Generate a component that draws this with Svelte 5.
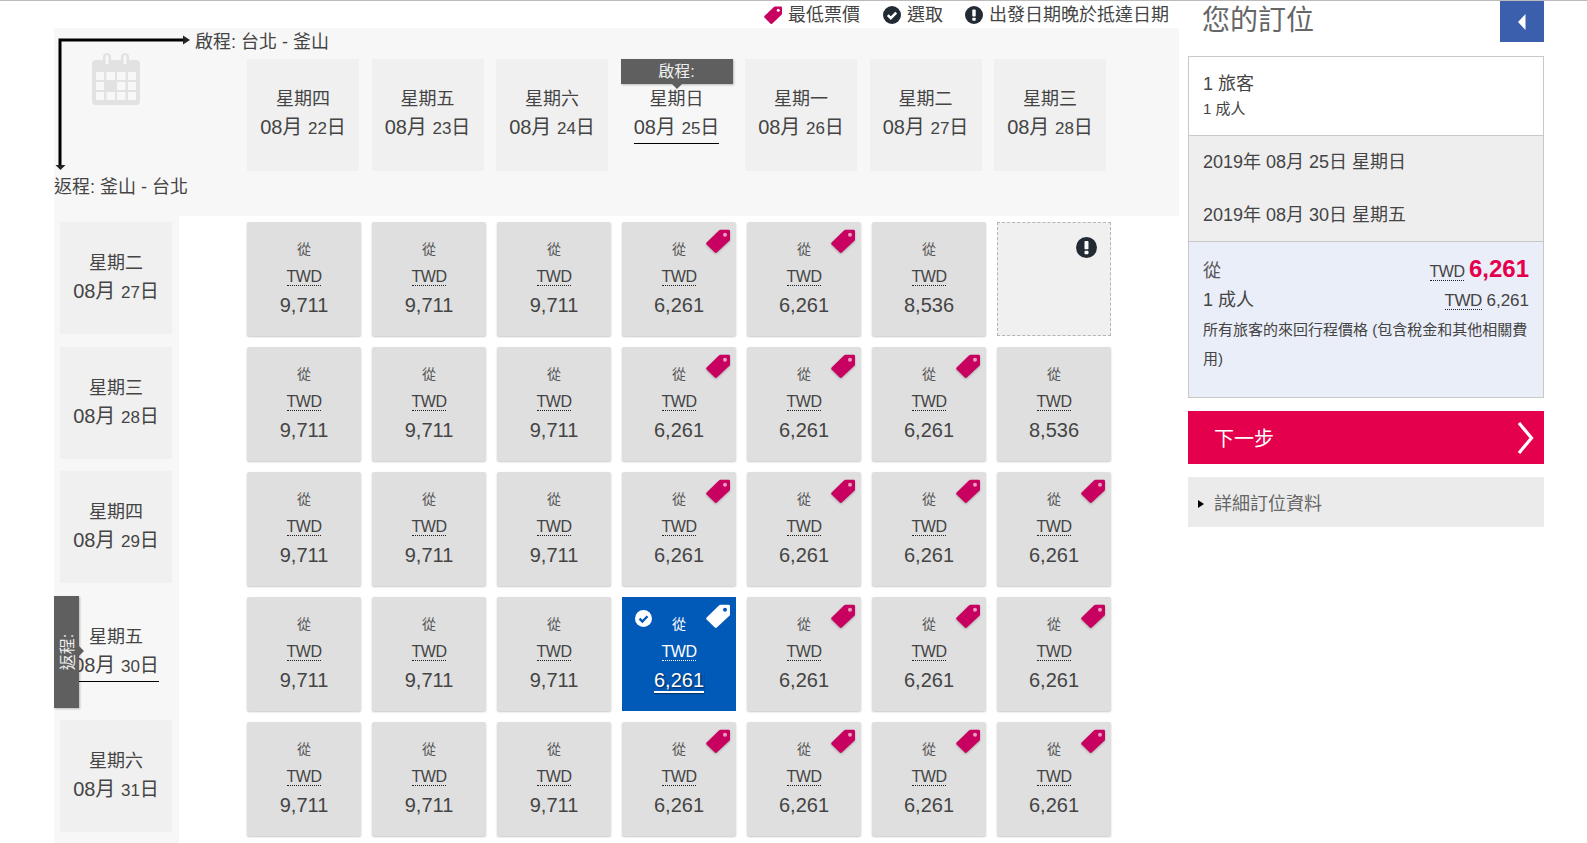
<script>
  const heads = [
    ['星期四', '22'], ['星期五', '23'], ['星期六', '24'], ['星期日', '25', true],
    ['星期一', '26'], ['星期二', '27'], ['星期三', '28']
  ];
  const rows = [
    { day: '星期二', d: '27', cells: [9711, 9711, 9711, 6261, 6261, 8536, null] },
    { day: '星期三', d: '28', cells: [9711, 9711, 9711, 6261, 6261, 6261, 8536] },
    { day: '星期四', d: '29', cells: [9711, 9711, 9711, 6261, 6261, 6261, 6261] },
    { day: '星期五', d: '30', sel: true, cells: [9711, 9711, 9711, 6261, 6261, 6261, 6261] },
    { day: '星期六', d: '31', cells: [9711, 9711, 9711, 6261, 6261, 6261, 6261] }
  ];
  const fmt = (n) => n.toLocaleString('en-US');
</script>

{#snippet tag(size, cls)}
  <svg class="tagicon {cls}" width={size} height={size} viewBox="0 0 24 24">
    <path class="tagbody" d="M0.6 13.4 13.2 1.2Q13.8.8 14.6.8L22.6.8Q24 .8 24 2.2L24 10.4Q24 11.2 23.4 11.8L10.8 23.6Q9.8 24.4 8.8 23.6L.6 15.4Q-.2 14.4.6 13.4Z" />
    <circle class="taghole" cx="19" cy="5.8" r="2" />
  </svg>
{/snippet}

{#snippet check(size)}
  <svg width={size} height={size} viewBox="0 0 18 18">
    <circle cx="9" cy="9" r="9" fill="#222b33" />
    <path d="M4.8 9.2 7.8 12.2 13.2 6.6" fill="none" stroke="#fff" stroke-width="2.6" />
  </svg>
{/snippet}

{#snippet bang(size)}
  <svg width={size} height={size} viewBox="0 0 18 18">
    <circle cx="9" cy="9" r="9" fill="#222b33" />
    <rect x="7.3" y="3.4" width="3.4" height="7.2" rx="0.8" fill="#fff" />
    <rect x="7.3" y="11.8" width="3.4" height="3" rx="0.8" fill="#fff" />
  </svg>
{/snippet}

{#snippet date(d, underline)}
  <div class="dcell-date" class:uline={underline}>08月 <span class="dnum">{d}</span><span class="dri">日</span></div>
{/snippet}

<div class="page">
  <div class="main">
    <div class="legend">
      <span class="lg lg1">{@render tag(18, 'pink')}最低票價</span>
      <span class="lg lg2">{@render check(18)}選取</span>
      <span class="lg lg3">{@render bang(18)}出發日期晚於抵達日期</span>
    </div>

    <div class="head">
      <svg class="arrows" width="140" height="145" viewBox="0 0 140 145">
        <path d="M6 12H130M6 10.5V138" fill="none" stroke="#000" stroke-width="3" />
        <path d="M129 7.500 136 12 129 16.500Z" fill="#222" />
        <path d="M1.500 137H11.500L6.500 142Z" fill="#222" />
      </svg>
      <svg class="cal" width="48" height="52" viewBox="0 0 48 52">
        <path fill="#e2e2e2" d="M4 7H11V4.500Q11 0 15 0Q19 0 19 4.500V7H29V4.500Q29 0 33 0Q37 0 37 4.500V7H44Q48 7 48 11V48Q48 52 44 52H4Q0 52 0 48V11Q0 7 4 7Z" />
        <path fill="#f7f7f7" d="M13.500 3.500Q13.500 2 15 2Q16.500 2 16.500 3.500V11H13.500ZM31.500 3.500Q31.500 2 33 2Q34.500 2 34.500 3.500V11H31.500Z" />
        <g fill="#f7f7f7">
          <rect x="4" y="19" width="8" height="8" /><rect x="14.500" y="19" width="8.500" height="8" /><rect x="25" y="19" width="8.500" height="8" /><rect x="36" y="19" width="8" height="8" />
          <rect x="4" y="29" width="8" height="8" /><rect x="25" y="29" width="8.500" height="8" /><rect x="36" y="29" width="8" height="8" />
          <rect x="4" y="39" width="8" height="8" /><rect x="14.500" y="39" width="8.500" height="8" /><rect x="25" y="39" width="8.500" height="8" /><rect x="36" y="39" width="8" height="8" />
        </g>
      </svg>
      <div class="out-label">啟程: 台北 - 釜山</div>
      <div class="ret-label">返程: 釜山 - 台北</div>
      <div class="head-cells">
        {#each heads as h}
          <div class="hcell" class:active={h[2]}>
            {#if h[2]}<div class="out-tab">啟程:</div>{/if}
            <div class="dcell-day">{h[0]}</div>
            {@render date(h[1], h[2])}
          </div>
        {/each}
      </div>
    </div>

    <div class="body">
      <div class="rowheads">
        {#each rows as r}
          <div class="rcell" class:active={r.sel}>
            {#if r.sel}<div class="ret-tab"><span>返程:</span></div>{/if}
            <div class="dcell-day">{r.day}</div>
            {@render date(r.d, r.sel)}
          </div>
        {/each}
      </div>
      <div class="grid">
        {#each rows as r}
          <div class="grow">
            {#each r.cells as c, i}
              {#if c === null}
                <div class="cell none"><span class="none-ic">{@render bang(21)}</span></div>
              {:else}
                {@const selected = r.sel && i === 3}
                <div class="cell" class:selected>
                  {#if c === 6261}<span class="celltag">{@render tag(24, selected ? 'white' : 'pink')}</span>{/if}
                  {#if selected}
                    <svg class="selcheck" width="17" height="17" viewBox="0 0 18 18">
                      <circle cx="9" cy="9" r="9" fill="#fff" />
                      <path d="M4.800 9.200 7.800 12.200 13.200 6.600" fill="none" stroke="#0159b8" stroke-width="2.600" />
                    </svg>
                  {/if}
                  <div class="from">從</div>
                  <div class="cur"><abbr>TWD</abbr></div>
                  <div class="amt"><span>{fmt(c)}</span></div>
                </div>
              {/if}
            {/each}
          </div>
        {/each}
      </div>
    </div>
  </div>

  <aside class="side">
    <div class="side-top">
      <div class="title">您的訂位</div>
      <div class="collapse"><svg width="8" height="16" viewBox="0 0 8 16"><path d="M7.500 0V16L0 8Z" fill="#fff" /></svg></div>
    </div>
    <div class="box">
      <div class="b1">
        <div class="pax">1 旅客</div>
        <div class="paxs">1 成人</div>
      </div>
      <div class="b2">
        <div>2019年 08月 25日 星期日</div>
        <div>2019年 08月 30日 星期五</div>
      </div>
      <div class="b3">
        <div class="line l1"><span class="f">從</span><span><abbr>TWD</abbr> <b>6,261</b></span></div>
        <div class="line l2"><span>1 成人</span><span><abbr>TWD</abbr> 6,261</span></div>
        <div class="note">所有旅客的來回行程價格 (包含稅金和其他相關費用)</div>
      </div>
    </div>
    <div class="next">
      <span>下一步</span>
      <svg width="17" height="34" viewBox="0 0 17 34"><path d="M2 2 14.500 17 2 32" fill="none" stroke="#fff" stroke-width="3.200" /></svg>
    </div>
    <div class="details"><i></i><span>詳細訂位資料</span></div>
  </aside>
</div>

<style>
  :global(body) {
    margin: 0;
    background: #fff;
    font-family: "Liberation Sans", "Noto Sans CJK TC", sans-serif;
    color: #444;
  }
  .page {
    display: flex;
    height: 842px;
    overflow: hidden;
    border-top: 1px solid #bbb;
  }
  .main {
    width: 1125px;
    margin-left: 54px;
    flex: none;
  }
  .legend {
    height: 27px;
    display: flex;
    justify-content: flex-end;
    align-items: center;
    font-size: 18px;
    line-height: 24px;
    padding-right: 10px;
  }
  .lg { display: flex; align-items: center; gap: 6px; }
  .lg1 { margin-right: 23px; }
  .lg2 { margin-right: 22px; }
  .head {
    position: relative;
    height: 188px;
    background: #f7f7f7;
    box-sizing: border-box;
    padding: 31px 0 0 193px;
  }
  .arrows { position: absolute; left: 0; top: 0; }
  .cal { position: absolute; left: 38px; top: 25px; }
  .out-label, .ret-label {
    position: absolute;
    font-size: 18px;
    line-height: 24px;
    white-space: nowrap;
  }
  .out-label { left: 141px; top: 2px; }
  .ret-label { left: 0; top: 147px; }
  .head-cells { display: flex; gap: 12.5px; }
  .hcell {
    position: relative;
    width: 112px;
    height: 112px;
    flex: none;
    background: #f0f0f0;
    text-align: center;
    padding-top: 26px;
    box-sizing: border-box;
  }
  .hcell.active { background: none; }
  .dcell-day { font-size: 18px; line-height: 28px; }
  .dcell-date { font-size: 20px; line-height: 29px; white-space: nowrap; }
  .dnum { font-size: 17px; }
  .dri { font-size: 19px; }
  .uline { display: inline-block; border-bottom: 1px solid #000; line-height: 28px; padding: 0; }
  .out-tab {
    position: absolute;
    left: 0;
    top: 0;
    width: 112px;
    height: 25px;
    background: #5f5f5f;
    color: #eee;
    font-size: 16px;
    line-height: 25px;
    box-shadow: 1px 1px 2px rgba(0, 0, 0, .25);
  }
  .out-tab::after {
    content: "";
    position: absolute;
    left: 50%;
    top: 25px;
    margin-left: -5px;
    border: 5px solid transparent;
    border-top-color: #5f5f5f;
    border-bottom: 0;
  }
  .body { display: flex; }
  .rowheads {
    width: 125px;
    height: 627px;
    flex: none;
    box-sizing: border-box;
    padding: 6px 0 0 6px;
    background: #f7f7f7;
    display: flex;
    flex-direction: column;
    gap: 12.5px;
  }
  .rcell {
    position: relative;
    width: 112px;
    height: 112px;
    flex: none;
    background: #f0f0f0;
    text-align: center;
    padding-top: 27px;
    box-sizing: border-box;
  }
  .rcell.active { background: none; }
  .ret-tab {
    position: absolute;
    left: -6px;
    top: 0;
    width: 25px;
    height: 112px;
    background: #5f5f5f;
    color: #eee;
    font-size: 16px;
    box-shadow: 1px 1px 2px rgba(0, 0, 0, .25);
    display: flex;
    align-items: center;
    justify-content: center;
    z-index: 1;
  }
  .ret-tab span { transform: rotate(-90deg); white-space: nowrap; }
  .ret-tab::after {
    content: "";
    position: absolute;
    left: 25px;
    top: 50%;
    margin-top: -6px;
    border: 5px solid transparent;
    border-left-color: #5f5f5f;
    border-right: 0;
  }
  .grid {
    margin-left: 68px;
    padding-top: 6px;
    display: flex;
    flex-direction: column;
    gap: 11px;
  }
  .grow { display: flex; gap: 11px; }
  .cell {
    position: relative;
    width: 114px;
    height: 114px;
    box-sizing: border-box;
    flex: none;
    background: #dfdfdf;
    border-radius: 2px;
    box-shadow: 0 1px 2px rgba(0, 0, 0, .22);
    text-align: center;
    padding-top: 13px;
    line-height: 28px;
  }
  .from { font-size: 14px; color: #555; }
  .cur { font-size: 16px; }
  abbr {
    text-decoration: none;
    border-bottom: 1px dotted #222;
    letter-spacing: -.5px;
    padding-bottom: 0;
    line-height: 17px;
    display: inline-block;
  }
  .amt { font-size: 20px; }
  .celltag { position: absolute; right: 6px; top: 7px; line-height: 0; }
  .tagicon { display: block; flex: none; }
  .pink .tagbody { fill: #c8005f; }
  .pink .taghole { fill: #e8a0c0; }
  .celltag .pink { filter: drop-shadow(0 1px 1px rgba(0, 0, 0, .25)); }
  .lg .taghole { fill: #fff; }
  .white .tagbody { fill: #fff; }
  .white .taghole { fill: #0159b8; }
  .selected {
    background: #0159b8;
    color: #fff;
    box-shadow: none;
    border-radius: 0;
  }
  .selected .from { color: #fff; }
  .selected abbr { border-bottom-color: #fff; }
  .selected .amt span {
    border-bottom: 2px solid #fff;
    line-height: 22px;
    display: inline-block;
    text-shadow: 1px 1px 2px rgba(0, 0, 0, .6);
    box-shadow: 0 1px 1px rgba(0, 0, 0, .4);
  }
  .selcheck { position: absolute; left: 13px; top: 13px; }
  .none {
    background: #f0f0f0;
    border: 1px dashed #b5b5b5;
    box-shadow: none;
    border-radius: 0;
  }
  .none-ic { position: absolute; right: 13px; top: 14px; line-height: 0; }
  .side { width: 356px; margin-left: 9px; flex: none; }
  .side-top { display: flex; justify-content: space-between; height: 55px; }
  .title {
    font-size: 28px;
    line-height: 40px;
    color: #666;
    padding-left: 14px;
  }
  .collapse {
    width: 44px;
    height: 41px;
    background: #3b5fad;
    display: flex;
    align-items: center;
    justify-content: center;
  }
  .box { border: 1px solid #c8c8c8; }
  .b1 { height: 79px; box-sizing: border-box; padding: 14px 14px 0; border-bottom: 1px solid #c8c8c8; }
  .pax { font-size: 18px; line-height: 26px; }
  .paxs { font-size: 15px; line-height: 24px; }
  .b2 {
    height: 106px;
    box-sizing: border-box;
    padding: 12px 14px 0;
    background: #eee;
    border-bottom: 1px solid #c8c8c8;
    font-size: 18px;
    line-height: 28px;
    display: flex;
    flex-direction: column;
    gap: 25px;
  }
  .b3 { height: 155px; box-sizing: border-box; padding: 11px 14px 0; background: #eaeef8; }
  .line { display: flex; justify-content: space-between; align-items: baseline; }
  .l1 { height: 32px; font-size: 16px; line-height: 32px; }
  .l1 .f { color: #555; font-size: 18px; }
  .l1 b { font-size: 24px; color: #e4004c; }
  .l2 { height: 30px; font-size: 17px; line-height: 30px; }
  .l2 span:first-child { font-size: 18px; }
  .note { font-size: 15px; line-height: 29px; }
  .next {
    height: 53px;
    margin-top: 13px;
    background: #e4004c;
    color: #fff;
    display: flex;
    align-items: center;
    justify-content: space-between;
    font-size: 20px;
    padding: 0 10px 0 26px;
  }
  .details {
    height: 50px;
    margin-top: 13px;
    background: #ebebeb;
    display: flex;
    align-items: center;
    font-size: 18px;
    color: #666;
    padding-left: 10px;
    box-sizing: border-box;
  }
  .details i {
    width: 0;
    height: 0;
    border: 4px solid transparent;
    border-left: 6px solid #000;
    border-right: 0;
    margin-right: 10px;
    margin-top: 3px;
  }
</style>
